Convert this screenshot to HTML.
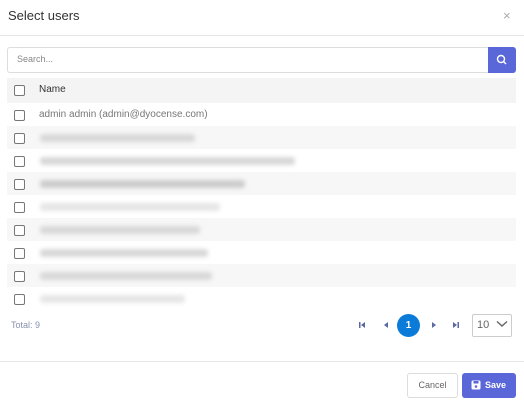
<!DOCTYPE html><html><head><style>
body{margin:0;width:524px;height:404px;background:#fff;font-family:"Liberation Sans",sans-serif;position:relative;overflow:hidden;color:#555}
.a{position:absolute}
.cb{position:absolute;left:14px;width:9px;height:9px;border:1px solid #777;border-radius:2px;background:#fff}
.row{position:absolute;left:7px;width:509px;height:23px}
.bl{position:absolute;left:40px;height:8px;background:#d8d8d8;filter:blur(2px);border-radius:3px}
</style></head><body>
<div class="a" style="left:8px;top:8px;font-size:13px;color:#333">Select users</div>
<div class="a" style="left:503px;top:8px;font-size:13px;color:#aaa">×</div>
<div class="a" style="left:0;top:35px;width:524px;height:1px;background:#e6e6e6"></div>
<div class="a" style="left:7px;top:47px;width:480px;height:24px;border:1px solid #ddd;border-radius:3px 0 0 3px"></div>
<div class="a" style="left:17px;top:54px;font-size:9px;color:#888">Search...</div>
<div class="a" style="left:488px;top:47px;width:28px;height:26px;background:#5a67d8;border-radius:0 3px 3px 0"></div>
<svg class="a" style="left:496px;top:54px" width="12" height="12" viewBox="0 0 12 12"><circle cx="5" cy="5" r="3.5" fill="none" stroke="#fff" stroke-width="1.4"/><path d="M7.5 7.5L10 10" stroke="#fff" stroke-width="1.4"/></svg>
<div class="row" style="top:78px;height:25px;background:#f4f4f4"></div>
<div class="cb" style="top:85px"></div>
<div class="a" style="left:39px;top:84px;font-size:10px;color:#333">Name</div>
<div class="cb" style="top:110px"></div>
<div class="a" style="left:39px;top:109px;font-size:10px;color:#777">admin admin (admin@dyocense.com)</div>
<div class="row" style="top:126px;background:#f7f7f7"></div>
<div class="row" style="top:172px;background:#f7f7f7"></div>
<div class="row" style="top:218px;background:#f7f7f7"></div>
<div class="row" style="top:264px;background:#f7f7f7"></div>
<div class="cb" style="top:133px"></div><div class="bl" style="top:134px;width:155px"></div>
<div class="cb" style="top:156px"></div><div class="bl" style="top:157px;width:255px"></div>
<div class="cb" style="top:179px"></div><div class="bl" style="top:180px;width:205px;background:#ccc"></div>
<div class="cb" style="top:202px"></div><div class="bl" style="top:203px;width:180px;background:#e6e6e6"></div>
<div class="cb" style="top:225px"></div><div class="bl" style="top:226px;width:160px"></div>
<div class="cb" style="top:248px"></div><div class="bl" style="top:249px;width:168px"></div>
<div class="cb" style="top:271px"></div><div class="bl" style="top:272px;width:172px"></div>
<div class="cb" style="top:294px"></div><div class="bl" style="top:295px;width:145px;background:#e6e6e6"></div>
<div class="a" style="left:11px;top:320px;font-size:9px;color:#8890b0">Total: 9</div>
<svg class="a" style="left:358px;top:321px" width="8" height="8" viewBox="0 0 8 8"><rect x="1" y="1" width="1.5" height="6" fill="#5a6aa0"/><path d="M7 1L3 4L7 7Z" fill="#5a6aa0"/></svg>
<svg class="a" style="left:382px;top:321px" width="8" height="8" viewBox="0 0 8 8"><path d="M6 1L2 4L6 7Z" fill="#5a6aa0"/></svg>
<div class="a" style="left:397px;top:314px;width:23px;height:23px;border-radius:50%;background:#0a7bd8;color:#fff;font-size:10px;font-weight:bold;text-align:center;line-height:23px">1</div>
<svg class="a" style="left:430px;top:321px" width="8" height="8" viewBox="0 0 8 8"><path d="M2 1L6 4L2 7Z" fill="#5a6aa0"/></svg>
<svg class="a" style="left:452px;top:321px" width="8" height="8" viewBox="0 0 8 8"><path d="M1 1L5 4L1 7Z" fill="#5a6aa0"/><rect x="5.5" y="1" width="1.5" height="6" fill="#5a6aa0"/></svg>
<div class="a" style="left:472px;top:314px;width:38px;height:21px;border:1px solid #ccc;border-radius:2px"></div>
<div class="a" style="left:477px;top:319px;font-size:11px;color:#666">10</div>
<svg class="a" style="left:496px;top:320px" width="12" height="8" viewBox="0 0 12 8"><path d="M1 1.5L6 6L11 1.5" fill="none" stroke="#666" stroke-width="1.4"/></svg>
<div class="a" style="left:0;top:361px;width:524px;height:1px;background:#e6e6e6"></div>
<div class="a" style="left:407px;top:373px;width:49px;height:23px;border:1px solid #ddd;border-radius:3px;font-size:9px;color:#666;text-align:center;line-height:23px">Cancel</div>
<div class="a" style="left:462px;top:373px;width:54px;height:25px;background:#5a67d8;border-radius:3px"></div>
<svg class="a" style="left:471px;top:380px" width="10" height="10" viewBox="0 0 10 10"><rect x="0.5" y="0.5" width="9" height="9" rx="1.5" fill="#fff"/><rect x="2.5" y="1" width="5" height="2.5" fill="#5a67d8"/><circle cx="5" cy="6.5" r="1.3" fill="#5a67d8"/></svg>
<div class="a" style="left:485px;top:380px;font-size:9px;color:#fff;font-weight:bold">Save</div>
</body></html>
